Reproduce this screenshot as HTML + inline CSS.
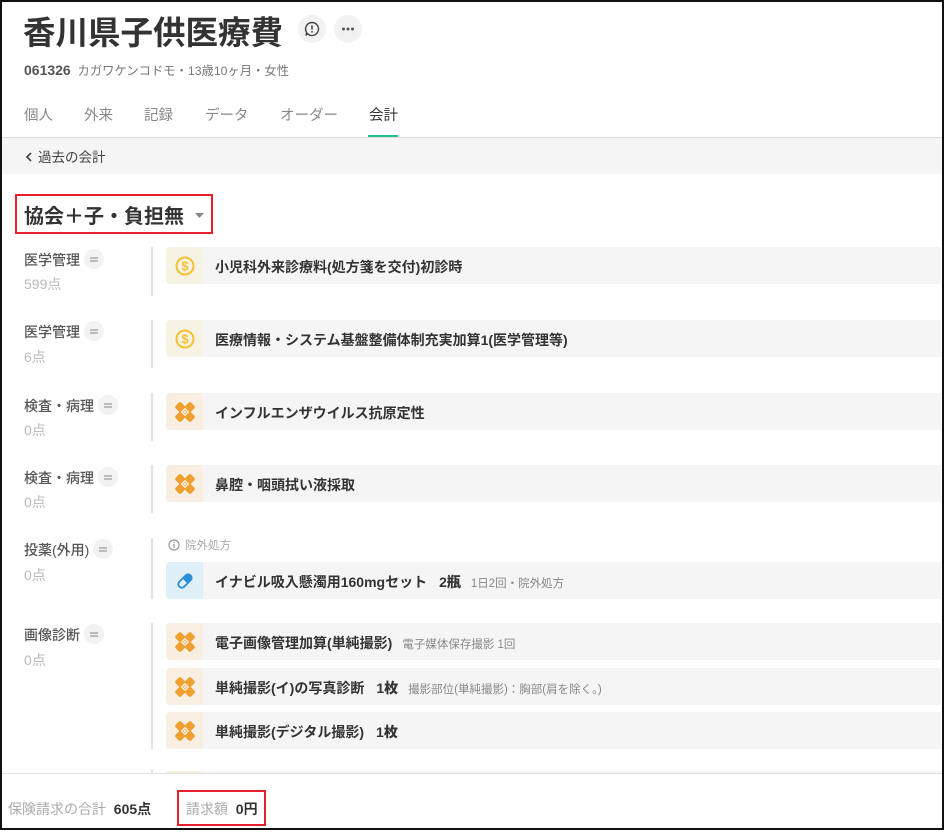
<!DOCTYPE html>
<html><head><meta charset="utf-8">
<style>
*{margin:0;padding:0;box-sizing:border-box}
body{width:946px;height:834px;background:#fff;font-family:"Liberation Sans","Noto Sans CJK JP",sans-serif;color:#333;position:relative;overflow:hidden}
.a{position:absolute;white-space:nowrap}
.frame{position:absolute;left:0;top:0;width:944px;height:830px;border:2px solid #111}
.lbl{font-size:14px;color:#555;font-weight:500}
.pt{font-size:14px;color:#bbb}
.eq{display:inline-block;width:20px;height:20px;border-radius:50%;background:#f2f2f2;vertical-align:middle;margin-left:4px;position:relative;top:-2px}
.eq:before,.eq:after{content:"";position:absolute;left:6px;width:8px;height:1.5px;background:#bbb}
.eq:before{top:8px}.eq:after{top:11px}
.vl{position:absolute;left:151px;width:2px;background:#e2e2e2}
.card{position:absolute;left:166px;width:775px;height:37px;background:#f5f5f5;border-radius:4px 0 0 4px;overflow:hidden}
.ic{position:absolute;left:0;top:0;width:37px;height:37px;background:#f7f3e4;display:flex;align-items:center;justify-content:center}
.ic.o{background:#f8efe2}.ic.b{background:#e0f0f8}
.t{position:absolute;left:49px;top:2px;line-height:37px;font-size:14px;font-weight:700;color:#333}
.t small{font-size:11.5px;font-weight:400;color:#888;margin-left:10px}
.t b{margin-left:12px}
</style></head><body>
<div class="frame"></div>
<div class="a" style="left:23px;top:12px;font-size:32.5px;font-weight:700;color:#333;line-height:42px">香川県子供医療費</div>
<div class="a" style="left:298px;top:15px;width:28px;height:28px;border-radius:50%;background:#f2f2f2">
<svg width="28" height="28" viewBox="0 0 28 28"><path d="M14 7.5a6.5 6.5 0 1 1-4.6 11.1L8 20.5l.6-3A6.5 6.5 0 0 1 14 7.5z" fill="none" stroke="#444" stroke-width="1.4"/><line x1="14" y1="10.5" x2="14" y2="14.5" stroke="#444" stroke-width="1.6"/><circle cx="14" cy="16.8" r=".9" fill="#444"/></svg></div>
<div class="a" style="left:334px;top:15px;width:28px;height:28px;border-radius:50%;background:#f2f2f2">
<svg width="28" height="28"><circle cx="9.5" cy="14" r="1.5" fill="#555"/><circle cx="14" cy="14" r="1.5" fill="#555"/><circle cx="18.5" cy="14" r="1.5" fill="#555"/></svg></div>
<div class="a" style="left:24px;top:61px;font-size:12.3px;color:#777;line-height:18px"><span style="color:#555;font-size:14px;font-weight:700">061326</span>&nbsp; カガワケンコドモ・13歳10ヶ月・女性</div>
<div class="a" style="left:24px;top:106px;font-size:14.5px;color:#888;line-height:20px">
<span class="a" style="left:0">個人</span><span class="a" style="left:60px">外来</span><span class="a" style="left:120px">記録</span><span class="a" style="left:181px">データ</span><span class="a" style="left:256px">オーダー</span><span class="a" style="left:345px;color:#333">会計</span></div>
<div class="a" style="left:368px;top:135px;width:30px;height:3px;background:#1fc08e"></div>
<div class="a" style="left:2px;top:137px;width:940px;height:1px;background:#ddd"></div>
<div class="a" style="left:2px;top:138px;width:940px;height:36px;background:#f5f5f5"></div>
<div class="a" style="left:24px;top:149px;font-size:13.5px;color:#444;line-height:18px"><svg width="10" height="12" style="vertical-align:-1px;margin-right:4px"><path d="M7 2L3 6l4 4" fill="none" stroke="#444" stroke-width="1.6"/></svg>過去の会計</div>
<div class="a" style="left:15px;top:194px;width:198px;height:40px;border:2px solid #e8202a"></div>
<div class="a" style="left:24px;top:203px;font-size:20px;font-weight:700;color:#333;line-height:28px">協会＋子・負担無 <svg width="12" height="8" style="margin-left:4px;vertical-align:3px"><path d="M1 1h9L5.5 6z" fill="#888"/></svg></div>

<div class="a lbl" style="left:24px;top:250px">医学管理<span class="eq"></span></div>
<div class="a pt" style="left:24px;top:274px">599点</div>
<div class="vl" style="top:247px;height:49px"></div>
<div class="a lbl" style="left:24px;top:322px">医学管理<span class="eq"></span></div>
<div class="a pt" style="left:24px;top:347px">6点</div>
<div class="vl" style="top:320px;height:48px"></div>
<div class="a lbl" style="left:24px;top:396px">検査・病理<span class="eq"></span></div>
<div class="a pt" style="left:24px;top:420px">0点</div>
<div class="vl" style="top:393px;height:48px"></div>
<div class="a lbl" style="left:24px;top:468px">検査・病理<span class="eq"></span></div>
<div class="a pt" style="left:24px;top:492px">0点</div>
<div class="vl" style="top:465px;height:48px"></div>
<div class="a lbl" style="left:24px;top:540px">投薬(外用)<span class="eq"></span></div>
<div class="a pt" style="left:24px;top:565px">0点</div>
<div class="vl" style="top:538px;height:61px"></div>
<div class="a lbl" style="left:24px;top:625px">画像診断<span class="eq"></span></div>
<div class="a pt" style="left:24px;top:650px">0点</div>
<div class="vl" style="top:623px;height:126px"></div>
<div class="vl" style="top:770px;height:4px"></div>

<svg width="0" height="0" style="position:absolute"><defs>
<g id="coin"><circle cx="10" cy="10" r="8.5" fill="none" stroke="#f2c230" stroke-width="2"/><text x="10" y="14.5" text-anchor="middle" font-size="13" font-weight="700" fill="#f2c230" font-family="Liberation Sans">$</text></g>
<g id="band"><rect x="-1" y="6" width="22" height="8" rx="2" fill="#f0a030" transform="rotate(45 10 10)"/><rect x="-1" y="6" width="22" height="8" rx="2" fill="#f0a030" transform="rotate(-45 10 10)"/><rect x="7" y="7" width="6" height="6" fill="#f8efe2" transform="rotate(45 10 10)"/><circle cx="10" cy="8.5" r=".7" fill="#f0a030"/><circle cx="10" cy="11.5" r=".7" fill="#f0a030"/><circle cx="8.5" cy="10" r=".7" fill="#f0a030"/><circle cx="11.5" cy="10" r=".7" fill="#f0a030"/></g>
</defs></svg>

<div class="card" style="top:247px"><div class="ic"><svg width="20" height="20"><use href="#coin"/></svg></div><div class="t">小児科外来診療料(処方箋を交付)初診時</div></div>
<div class="card" style="top:320px"><div class="ic"><svg width="20" height="20"><use href="#coin"/></svg></div><div class="t">医療情報・システム基盤整備体制充実加算1(医学管理等)</div></div>
<div class="card" style="top:393px"><div class="ic o"><svg width="20" height="20"><use href="#band"/></svg></div><div class="t">インフルエンザウイルス抗原定性</div></div>
<div class="card" style="top:465px"><div class="ic o"><svg width="20" height="20"><use href="#band"/></svg></div><div class="t">鼻腔・咽頭拭い液採取</div></div>
<div class="a" style="left:168px;top:538px;font-size:11.5px;color:#aaa;line-height:16px"><svg width="12" height="12" style="vertical-align:-2px;margin-right:5px"><circle cx="6" cy="6" r="5" fill="none" stroke="#999" stroke-width="1.2"/><line x1="6" y1="5" x2="6" y2="9" stroke="#999" stroke-width="1.3"/><circle cx="6" cy="3.3" r=".8" fill="#999"/></svg>院外処方</div>
<div class="card" style="top:562px"><div class="ic b"><svg width="20" height="20"><g transform="rotate(-45 10 10)"><rect x="2" y="6.5" width="16" height="7" rx="3.5" fill="none" stroke="#2a8fd8" stroke-width="1.8"/><path d="M10 6.5h4.5a3.5 3.5 0 0 1 0 7H10z" fill="#2a8fd8"/></g></svg></div><div class="t">イナビル吸入懸濁用160mgセット<b>2瓶</b><small>1日2回・院外処方</small></div></div>
<div class="card" style="top:623px"><div class="ic o"><svg width="20" height="20"><use href="#band"/></svg></div><div class="t">電子画像管理加算(単純撮影)<small>電子媒体保存撮影 1回</small></div></div>
<div class="card" style="top:668px"><div class="ic o"><svg width="20" height="20"><use href="#band"/></svg></div><div class="t">単純撮影(イ)の写真診断<b>1枚</b><small>撮影部位(単純撮影)：胸部(肩を除く。)</small></div></div>
<div class="card" style="top:712px"><div class="ic o"><svg width="20" height="20"><use href="#band"/></svg></div><div class="t">単純撮影(デジタル撮影)<b>1枚</b></div></div>
<div class="card" style="top:771px;height:3px"><div class="ic o"></div></div>

<div class="a" style="left:2px;top:773px;width:940px;height:1px;background:#e2e2e2"></div>
<div class="a" style="left:8px;top:799px;font-size:14px;color:#aaa;line-height:20px">保険請求の合計&nbsp; <span style="color:#333;font-weight:700">605点</span></div>
<div class="a" style="left:177px;top:790px;width:89px;height:36px;border:2px solid #e8202a"></div>
<div class="a" style="left:186px;top:799px;font-size:14px;color:#aaa;line-height:20px">請求額&nbsp; <span style="color:#333;font-weight:700">0円</span></div>
</body></html>
